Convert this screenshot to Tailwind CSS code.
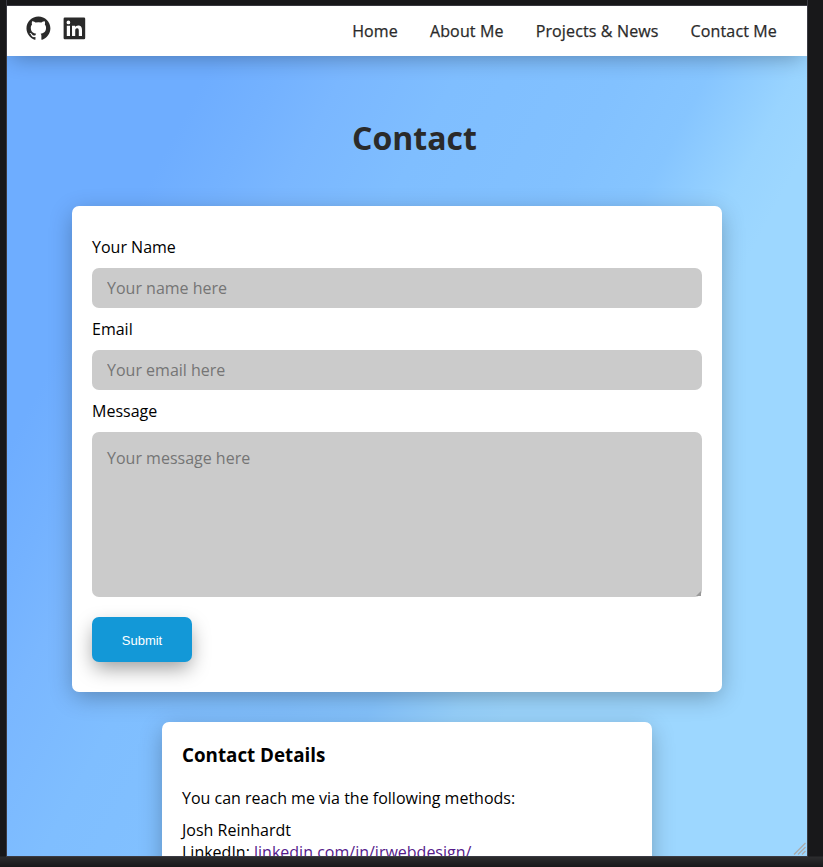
<!DOCTYPE html>
<html lang="en">
<head>
<meta charset="utf-8">
<title>Contact</title>
<script src="https://cdn.jsdelivr.net/npm/@tailwindcss/browser@4"></script>
</head>
<body class="h-[867px] w-[823px] overflow-hidden bg-[#18181a] bg-[linear-gradient(to_bottom,#18181a_856px,#2c2c2e_857px,#18181a_867px)] font-['Open_Sans',sans-serif] text-base text-black">
<div class="relative ml-1.5 flex h-[857px] w-[802px] flex-col overflow-hidden border border-t-0 border-[#3a3a42] bg-[linear-gradient(118deg,#6eadff_0%,#6eadff_19%,#74b2ff_25%,#7ab7ff_30%,#7fbeff_39%,#82c1ff_52%,#86c5ff_59%,#99d4ff_66%,#9dd7ff_70%,#9dd7ff_100%)]">
  <div class="h-1.5 shrink-0 border-b border-[#3a3a42] bg-[#18181a]"></div>
  <header class="z-10 flex h-[50px] shrink-0 items-center justify-between bg-white pr-[30px] pl-[17px] text-[#2a2a2a] shadow-[0_6px_22px_-5px_rgba(0,0,0,0.32)]">
    <div class="flex gap-[7px] pb-1.5">
      <svg class="size-[28.8px]" viewBox="0 0 24 24" fill="currentColor"><path d="M12.026 2c-5.509 0-9.974 4.465-9.974 9.974 0 4.406 2.857 8.145 6.821 9.465.499.09.679-.217.679-.481 0-.237-.008-.865-.011-1.696-2.775.602-3.361-1.338-3.361-1.338-.452-1.152-1.107-1.459-1.107-1.459-.905-.619.069-.605.069-.605 1.002.07 1.527 1.028 1.527 1.028.89 1.524 2.336 1.084 2.902.829.091-.645.351-1.085.635-1.334-2.214-.251-4.542-1.107-4.542-4.93 0-1.087.389-1.979 1.024-2.675-.101-.253-.446-1.268.099-2.64 0 0 .837-.269 2.742 1.021a9.582 9.582 0 0 1 2.496-.336 9.554 9.554 0 0 1 2.496.336c1.906-1.291 2.742-1.021 2.742-1.021.545 1.372.203 2.387.099 2.64.64.696 1.024 1.587 1.024 2.675 0 3.833-2.33 4.675-4.552 4.922.355.308.675.916.675 1.846 0 1.334-.012 2.41-.012 2.737 0 .267.178.577.687.479C19.146 20.115 22 16.379 22 11.974 22 6.465 17.535 2 12.026 2z"/></svg>
      <svg class="size-[28.8px]" viewBox="0 0 24 24" fill="currentColor"><path d="M20 3H4a1 1 0 0 0-1 1v16a1 1 0 0 0 1 1h16a1 1 0 0 0 1-1V4a1 1 0 0 0-1-1zM8.339 18.337H5.667v-8.59h2.672v8.59zM7.003 8.574a1.548 1.548 0 1 1 0-3.096 1.548 1.548 0 0 1 0 3.096zm11.335 9.763h-2.669V14.16c0-.996-.018-2.277-1.388-2.277-1.39 0-1.601 1.086-1.601 2.207v4.248h-2.667v-8.59h2.56v1.174h.037c.355-.675 1.227-1.387 2.524-1.387 2.704 0 3.203 1.778 3.203 4.092v4.71z"/></svg>
    </div>
    <nav class="flex gap-8 tracking-[0.14px] [-webkit-text-stroke:0.25px_#2a2a2a]">
      <a>Home</a><a>About Me</a><a>Projects &amp; News</a><a>Contact Me</a>
    </nav>
  </header>
  <h1 class="mt-[60px] ml-[15px] h-[90px] shrink-0 text-center text-[32px] leading-[44px] font-bold text-[#2a2a2a]">Contact</h1>
  <form class="ml-[65px] h-[486px] w-[650px] shrink-0 rounded-[7px] bg-white px-5 pt-[30px] shadow-[0_6px_24px_-2px_rgba(0,0,0,0.3)]">
    <label class="block h-8 leading-[22px]">Your Name</label>
    <input class="mb-2.5 block h-10 w-full rounded-[7px] bg-[#cbcbcb] px-[15px] placeholder:text-[#757575]" placeholder="Your name here">
    <label class="block h-8 leading-[22px]">Email</label>
    <input class="mb-2.5 block h-10 w-full rounded-[7px] bg-[#cbcbcb] px-[15px] placeholder:text-[#757575]" placeholder="Your email here">
    <label class="block h-8 leading-[22px]">Message</label>
    <div class="relative mb-5">
      <textarea class="block h-[165px] w-full resize-none rounded-[7px] bg-[#cbcbcb] p-[15px] leading-[22px] placeholder:text-[#757575]" placeholder="Your message here"></textarea>
      <svg class="absolute right-px bottom-px size-[5px]" viewBox="0 0 5 5"><path d="M5 0V5H0z" fill="#999"/></svg>
    </div>
    <button type="button" class="block h-[45px] w-[100px] rounded-[7px] bg-[#1398d7] pt-0.5 font-['Liberation_Sans',sans-serif] text-[13px] text-white shadow-[0_8px_20px_-2px_rgba(0,0,0,0.4)]">Submit</button>
  </form>
  <section class="mt-[30px] ml-[155px] h-[300px] w-[490px] shrink-0 rounded-[7px] bg-white px-5 pt-5 leading-[22px] shadow-[0_6px_24px_-2px_rgba(0,0,0,0.3)]">
    <h2 class="mb-[19px] text-[18.8px] leading-[26px] font-bold">Contact Details</h2>
    <p class="mb-2.5">You can reach me via the following methods:</p>
    <p>Josh Reinhardt<br>LinkedIn: <a class="text-[#551a8b] underline">linkedin.com/in/jrwebdesign/</a></p>
  </section>
  <svg class="absolute right-px bottom-px size-[13px]" viewBox="0 0 13 13" stroke="#aaa" stroke-width="1.3"><path d="M1 12.5 12.5 1M5 12.5 12.5 5M9 12.5 12.5 9"/></svg>
</div>
</body>
</html>
